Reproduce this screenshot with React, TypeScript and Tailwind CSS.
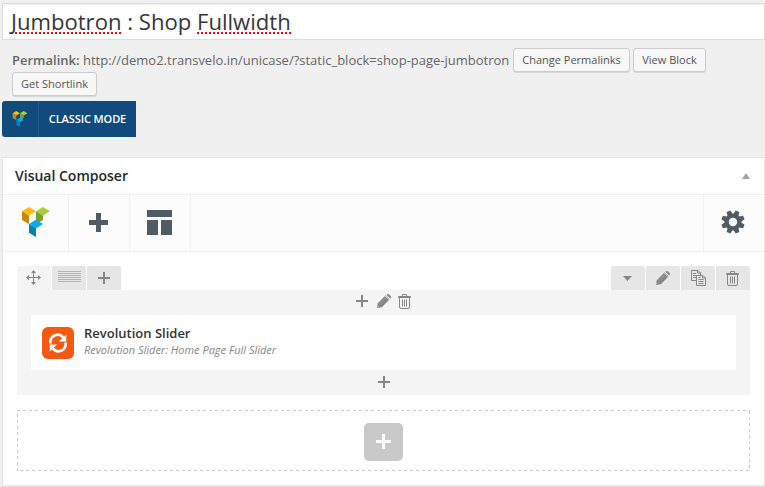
import type { ReactNode } from 'react';

function CubeLogo({ className }: { className: string }) {
  return (
    <svg viewBox="0 0 28 30" className={className}>
      <path d="M0 4.2 7 0l7 4.2-7 4.3z" fill="#fdb813" />
      <path d="M0 4.2 7 8.5V17L0 13z" fill="#c4870f" />
      <path d="M14 4.2 21 0l7 4.2-7 4.3z" fill="#a8cf38" />
      <path d="M14 4.2 21 8.5V13l-7 4z" fill="#819e2d" />
      <path d="M7 17l7-4.2 7 4.2-7 4.2z" fill="#00aeef" />
      <path d="M7 17l7 4.2V30l-7-4.2z" fill="#0081b3" />
    </svg>
  );
}

function Plus({ size, stroke, color }: { size: number; stroke: number; color: string }) {
  const o = (size - stroke) / 2;
  return (
    <svg width={size} height={size} fill={color} shapeRendering="crispEdges" className="block">
      <rect x={o} width={stroke} height={size} />
      <rect y={o} width={size} height={stroke} />
    </svg>
  );
}

function Pencil() {
  return (
    <svg width="14" height="14" viewBox="0 0 14 14" fill="#868686" className="block">
      <path d="M.8 9.200 8 2l4 4-7.200 7.200L0 14z" />
      <path d="M9.400.8c.9-.9 2-1 2.800-.2l1.200 1.200c.8.8.7 1.900-.2 2.800z" />
      <path d="M8.600 1.500l3.900 3.900" stroke="#8f8f8f" strokeWidth="1" strokeDasharray="1 .8" />
      <path d="M2.700 10.200 9 4" stroke="#a6a6a6" strokeWidth=".6" fill="none" />
      <path d="M.8 12.200 1.800 13.200" stroke="#c8c8c8" strokeWidth=".8" />
    </svg>
  );
}

function Trash() {
  return (
    <svg width="13" height="15" viewBox="0 0 13 15" fill="none" stroke="#868686" className="block">
      <path d="M.5 3.500v-1h12v1zM4.500 2V.5h4V2M1.500 4v9q0 1.500 1.500 1.500h7q1.500 0 1.500-1.500V4M4.500 5.500v7M6.500 5.500v7M8.500 5.500v7" />
    </svg>
  );
}

function Copy() {
  return (
    <svg width="15" height="16" viewBox="0 0 15 16" fill="none" stroke="#868686" className="block">
      <path d="M5 10.500H.5V.5H7L9.500 3v2M6.500.5V3h3M2 3.500h3M2 5.500h3M2 7.500h3" />
      <path d="M5.500 5.500H12L14.500 8v7.500h-9zM11.500 5.500V8h3M7.500 7.500h2M7.500 9.500h5M7.500 11.500h5M7.500 13.500h5" />
    </svg>
  );
}

function Move() {
  return (
    <svg width="15" height="15" viewBox="0 0 15 15" className="block">
      <path d="M7.500 1v13M1 7.500h13" stroke="#868686" />
      <path d="M7.500 0 10 3H5zM7.500 15 10 12H5zM0 7.500 3 5v5zM15 7.500 12 5v5z" fill="#868686" />
    </svg>
  );
}

function Gear() {
  return (
    <svg width="24" height="24" viewBox="-12 -12 24 24" fill="#505b65" className="block">
      {[22.5, 67.5, 112.5, 157.5].map((a) => (
        <path key={a} transform={`rotate(${a})`} d="M-2-11.700h4l.8 4.700v14L2 11.700h-4L-2.800 7V-7z" />
      ))}
      <circle r="8.500" />
      <circle r="4.200" fill="#fcfcfc" />
    </svg>
  );
}

function Refresh() {
  return (
    <svg width="20" height="20" viewBox="0 0 20 20" fill="none" className="block">
      <path d="M2.400 10.500V9.500A7.200 7.200 0 0 1 15.300 4.600M17.600 9.500V10.500A7.200 7.200 0 0 1 4.700 15.400" stroke="#fff" strokeWidth="2.600" />
      <path d="M18.300 1.500v7h-7.500zM1.700 18.500v-7h7.500z" fill="#fff" />
    </svg>
  );
}

function Button({ className, children }: { className: string; children: ReactNode }) {
  return (
    <button className={`h-6 shrink-0 rounded-[3px] border border-[#ccc] bg-[#f7f7f7] text-center text-[11px] leading-[22px] whitespace-nowrap text-[#555] shadow-[0_1px_0_#d8d8d8] ${className}`}>
      {children}
    </button>
  );
}

function Tab({ active, children }: { active?: boolean; children: ReactNode }) {
  return (
    <div className={`flex h-6 w-[34px] items-center justify-center rounded-t-[2px] ${active ? 'bg-[#f4f4f4]' : 'bg-[#e6e6e6]'}`}>
      {children}
    </div>
  );
}

// Two-pixel square dots on a four-pixel pitch, as the spell checker draws them.
const misspelt =
  'inline-block h-[30px] bg-[repeating-linear-gradient(90deg,#f00_0_2px,transparent_2px_4px)] bg-[length:100%_2px] bg-[position:0_28px] bg-no-repeat';

// Three-pixel dashes on all four edges.
const dashed =
  'bg-[repeating-linear-gradient(90deg,#c9c9c9_0_3px,transparent_3px_6px),repeating-linear-gradient(90deg,transparent_0_3px,#c9c9c9_3px_6px),repeating-linear-gradient(180deg,transparent_0_4px,#c9c9c9_4px_7px,transparent_7px_10px,#c9c9c9_10px_13px,transparent_13px_16px,#c9c9c9_16px_19px,transparent_19px_22px,#c9c9c9_22px_25px,transparent_25px_28px,#c9c9c9_28px_31px,transparent_31px_34px,#c9c9c9_34px_37px,transparent_37px_40px,#c9c9c9_40px_43px,transparent_43px_46px,#c9c9c9_46px_49px,transparent_49px_52px,#c9c9c9_52px_55px,transparent_55px_58px,#c9c9c9_58px_61px),repeating-linear-gradient(180deg,transparent_0_1px,#c9c9c9_1px_4px,transparent_4px_6px,transparent_6px_6px)] bg-[length:100%_1px,100%_1px,1px_100%,1px_100%] bg-[position:0_0,0_100%,0_0,100%_0] bg-no-repeat';

export default function App() {
  return (
    <div className="h-[487px] w-[765px] overflow-hidden bg-[#f0f0f0] pt-[3px] pl-[2px] font-['Open_Sans',sans-serif]">
      <div className="flex h-[37px] border border-[#ddd] bg-white pl-[8px] text-[22.1px] leading-[35px] whitespace-pre text-[#32373c] shadow-[inset_0_1px_2px_rgba(0,0,0,0.07)]">
        <span className={misspelt}>Jumbotron</span>
        <span> : Shop </span>
        <span className={misspelt}>Fullwidth</span>
      </div>

      <div className="mt-2 flex h-6 pl-[10px]">
        <div className="w-[501px] shrink-0 text-[13px] leading-6 whitespace-nowrap text-[#666]">
          <b className="font-semibold">Permalink:</b> http://demo2.transvelo.in/unicase/?static_block=shop-page-jumbotron
        </div>
        <Button className="mr-[3px] w-[117px]">Change Permalinks</Button>
        <Button className="w-[73px]">View Block</Button>
      </div>
      <div className="flex pl-[10px]">
        <Button className="w-[85px]">Get Shortlink</Button>
      </div>

      <div className="mt-[5px] flex h-9 w-[134px] rounded-l-[3px] bg-[#114b7d] text-white">
        <div className="flex w-[37px] items-center justify-center border-r border-[#255b89]">
          <CubeLogo className="h-4 w-4" />
        </div>
        <div className="flex-1 text-center text-[11px] leading-9 font-semibold tracking-[-0.1px] whitespace-nowrap">CLASSIC MODE</div>
      </div>

      <section className="mt-5 h-[329px] border border-[#e5e5e5] bg-white shadow-[0_1px_1px_rgba(0,0,0,0.04)]">
        <header className="flex h-9 items-center justify-between pr-[14px] pl-3 text-[14px] font-semibold text-[#23282d]">
          <h2 className="pb-[2px]">Visual Composer</h2>
          <svg width="8" height="6"><path d="M4 0l4 6H0z" fill="#a0a5aa" /></svg>
        </header>
        <div className="flex h-[58px] border-y border-[#f0f0f0] bg-[#fcfcfc]">
          <div className="flex w-[66px] items-center justify-center border-r border-[#f0f0f0]">
            <CubeLogo className="mb-[2px] h-[30px] w-7" />
          </div>
          <div className="flex w-[61px] items-center justify-center border-r border-[#f0f0f0] pr-[2px] pb-[1px]">
            <Plus size={19} stroke={5} color="#505b65" />
          </div>
          <div className="flex w-[61px] items-center justify-center border-r border-[#f0f0f0] pr-[1px] pb-[1px]">
            <svg width="25" height="25" fill="#505b65" shapeRendering="crispEdges" className="block">
              <path d="M0 0h25v7H0zM0 10h11v15H0zM14 10h11v15H14z" />
            </svg>
          </div>
          <div className="ml-auto flex w-[61px] items-center justify-center border-l border-[#f0f0f0] pr-[2px] pb-[2px]">
            <Gear />
          </div>
        </div>

        <div className="mx-[14px] mt-[14px]">
          <div className="flex gap-px">
            <Tab active><span className="pr-px pb-px"><Move /></span></Tab>
            <Tab>
              <svg width="23" height="11" className="mb-[3px] block">
                <path d="M0 .5h23M0 2.500h23M0 4.500h23M0 6.500h23M0 8.500h23M0 10.500h23" stroke="#b4b4b4" />
              </svg>
            </Tab>
            <Tab><Plus size={12} stroke={2} color="#868686" /></Tab>
            <div className="ml-auto flex gap-px">
              <Tab><svg width="9" height="5" className="mr-px"><path d="M0 0h9L4.500 5z" fill="#868686" /></svg></Tab>
              <Tab><Pencil /></Tab>
              <Tab><Copy /></Tab>
              <Tab><span className="pr-px"><Trash /></span></Tab>
            </div>
          </div>
          <div className="h-[105px] bg-[#f4f4f4] px-[14px]">
            <div className="flex h-[25px] items-center justify-center gap-[9px] pb-[3px]">
              <Plus size={12} stroke={2} color="#868686" />
              <Pencil />
              <span className="-ml-[2px]"><Trash /></span>
            </div>
            <div className="flex h-[55px] items-center rounded-[2px] bg-white pl-[11px]">
              <div className="flex size-8 items-center justify-center rounded-[6px] bg-[#f65711]"><Refresh /></div>
              <div className="ml-[10px] pb-[2px] whitespace-nowrap">
                <div className="text-[13px] leading-[17px] font-semibold text-[#333]">Revolution Slider</div>
                <div className="text-[11px] leading-4 text-[#868686] italic">Revolution Slider: Home Page Full Slider</div>
              </div>
            </div>
            <div className="flex h-6 items-center justify-center"><Plus size={12} stroke={2} color="#868686" /></div>
          </div>
          <div className={`mt-[15px] flex h-[61px] items-center justify-center ${dashed}`}>
            <div className="mt-[2px] flex h-[38px] w-[39px] items-center justify-center rounded-[5px] bg-[#c9c9c9]">
              <Plus size={15} stroke={3} color="#fff" />
            </div>
          </div>
        </div>
      </section>
    </div>
  );
}
